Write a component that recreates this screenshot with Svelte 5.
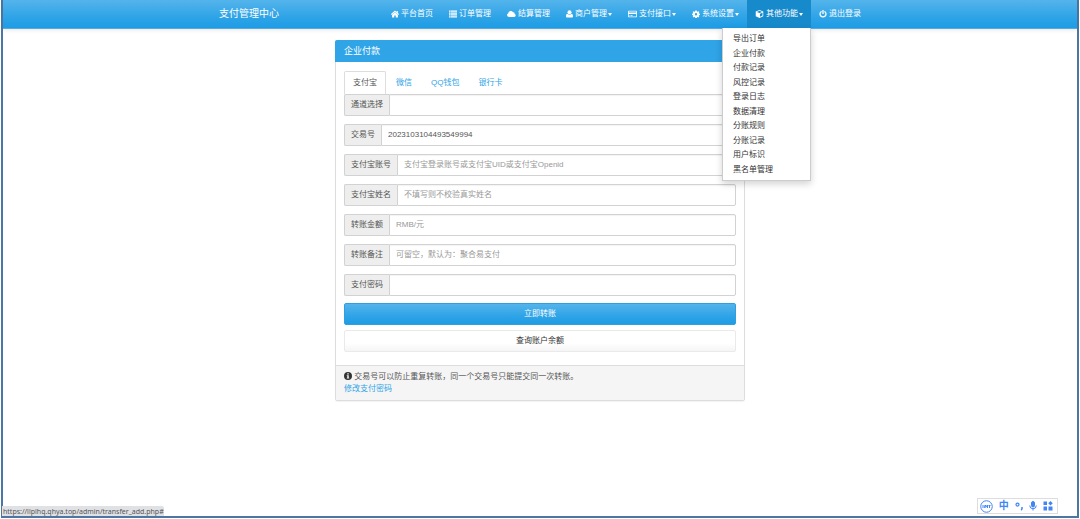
<script>
  const nav = [
    { label: '平台首页', icon: 'home', w: 8 },
    { label: '订单管理', icon: 'list', w: 8 },
    { label: '结算管理', icon: 'cloud', w: 9 },
    { label: '商户管理', icon: 'user', w: 7, caret: true },
    { label: '支付接口', icon: 'card', w: 9, caret: true },
    { label: '系统设置', icon: 'cog', w: 8, caret: true },
    { label: '其他功能', icon: 'cube', w: 9, caret: true, open: true },
    { label: '退出登录', icon: 'power', w: 8 }
  ];
  const menu = ['导出订单', '企业付款', '付款记录', '风控记录', '登录日志', '数据清理', '分账规则', '分账记录', '用户标识', '黑名单管理'];
  const tabs = ['支付宝', '微信', 'QQ钱包', '银行卡'];
  const fields = [
    { id: 'channel', label: '通道选择', select: true },
    { id: 'trade', label: '交易号', value: '2023103104493549994' },
    { id: 'account', label: '支付宝账号', hint: '支付宝登录账号或支付宝UID或支付宝Openid' },
    { id: 'name', label: '支付宝姓名', hint: '不填写则不校验真实姓名' },
    { id: 'money', label: '转账金额', hint: 'RMB/元' },
    { id: 'remark', label: '转账备注', hint: '可留空，默认为：聚合易支付' },
    { id: 'password', label: '支付密码', type: 'password' }
  ];
</script>

{#snippet icon(name, w)}
  <svg class="icon" width={w} height="8" viewBox="0 0 {w * 2} 16" fill="currentColor" aria-hidden="true">
    {#if name === 'home'}
      <path d="M8 1 0 8.200l1.200 1.600L8 3.800l6.800 6L16 8.200l-2.300-2V2h-2.400v2z" />
      <path d="M8 4.600 2.200 9.600V15h4.300v-4h3v4h4.300V9.600z" />
    {:else if name === 'list'}
      <path d="M0 1h2.500v2.600H0zM3.200 1H16v2.600H3.200zM0 4.800h2.500v2.600H0zM3.200 4.800H16v2.600H3.200zM0 8.600h2.500v2.600H0zM3.200 8.600H16v2.600H3.200zM0 12.400h2.500V15H0zM3.200 12.400H16V15H3.200z" />
    {:else if name === 'cloud'}
      <path d="M4 14a4 4 0 0 1-1.400-7.700A5 5 0 0 1 12 4.600a3 3 0 0 1 3.300 3.200A3.200 3.200 0 0 1 14.500 14z" />
    {:else if name === 'user'}
      <circle cx="7" cy="4.500" r="4" />
      <path d="M3 7.500a5.500 5.500 0 0 0 8 0c2.500.5 3 3 3 5.500 0 1.300-1 2-2 2H2c-1 0-2-.7-2-2 0-2.500.5-5 3-5.500z" />
    {:else if name === 'card'}
      <path fill-rule="evenodd" d="M1.500 1.500h15A1.500 1.500 0 0 1 18 3v10a1.500 1.500 0 0 1-1.500 1.500h-15A1.500 1.500 0 0 1 0 13V3a1.500 1.500 0 0 1 1.500-1.500zM1.500 3v2h15V3zm0 5v5h15V8zM3 10.500h2V12H3zm3 0h3V12H6z" />
    {:else if name === 'cog'}
      <path fill-rule="evenodd" d="m6.600 1h2.800l.4 2 1.200.5 1.800-1.200 1.900 1.900-1.200 1.700.4 1 2 .4v2.700l-2 .4-.4 1 1.200 1.800-1.900 1.900-1.800-1.200-1.200.5-.4 2H6.600l-.4-2-1.200-.5-1.700 1.200-2-1.900L2.500 11.400l-.4-1-2-.4V7.300l2-.4.4-1L1.300 4.200l2-1.900L5 3.500 6.200 3zM8 6.200a2.400 2.400 0 1 0 0 4.800 2.400 2.400 0 0 0 0-4.800z" />
    {:else if name === 'cube'}
      <path fill-rule="evenodd" d="m9 0 7.500 3v9.500L9 16l-7.500-3.500V3zm0 1.700L3.800 3.800 9 5.900l5.200-2.100zM10 7.500v6l5-2.300V5.500z" />
    {:else if name === 'power'}
      <path d="M6.700 0h2.600v8H6.700z" />
      <path d="M4.200 3.300a6 6 0 1 0 7.600 0" fill="none" stroke="currentColor" stroke-width="2.600" stroke-linecap="round" />
    {:else}
      <path fill-rule="evenodd" d="M8 0a8 8 0 1 1 0 16A8 8 0 0 1 8 0zM6.500 2.500v2.500h3V2.500zM5.500 6.500V8h1v3.500h-1V13h5v-1.500h-1v-5z" />
    {/if}
  </svg>
{/snippet}

<div class="window">
  <nav class="navbar">
    <div class="container">
      <a class="brand" href="#home">支付管理中心</a>
      <ul class="links">
        {#each nav as item}
          <li>
            <a href="#{item.icon}" class:open={item.open}>
              {@render icon(item.icon, item.w)}
              <span>{item.label}</span>
              {#if item.caret}<i class="caret"></i>{/if}
            </a>
            {#if item.open}
              <ul class="menu">
                {#each menu as entry}
                  <li><a href="#menu">{entry}</a></li>
                {/each}
              </ul>
            {/if}
          </li>
        {/each}
      </ul>
    </div>
  </nav>

  <main class="panel">
    <h1>企业付款</h1>
    <form>
      <ul class="tabs">
        {#each tabs as tab, i}
          <li><a href="#tab{i}" class:active={i === 0}>{tab}</a></li>
        {/each}
      </ul>
      {#each fields as f}
        <div class="group">
          <label for={f.id}>{f.label}</label>
          {#if f.select}
            <select id={f.id}></select>
          {:else}
            <input id={f.id} type={f.type ?? 'text'} value={f.value ?? ''} placeholder={f.hint ?? ''} />
          {/if}
        </div>
      {/each}
      <div class="actions">
        <button type="button" class="primary">立即转账</button>
        <button type="button" class="plain">查询账户余额</button>
      </div>
    </form>
    <footer>
      <p>{@render icon('info', 8)} 交易号可以防止重复转账，同一个交易号只能提交同一次转账。</p>
      <p><a href="#password">修改支付密码</a></p>
    </footer>
  </main>

  <div class="status">https://llplhq.qhya.top/admin/transfer_add.php#</div>

  <div class="ime">
    <svg width="13" height="13" viewBox="0 0 26 26" fill="none" stroke="currentColor" stroke-width="2" aria-hidden="true">
      <circle cx="13" cy="13" r="11.500" />
      <path d="M6 10v6M9.500 16v-5h3v3h-3M15 10v6M17 11h4M19 11v5" />
    </svg>
    <b>中</b>
    <svg width="9" height="9" viewBox="0 0 18 18" fill="none" stroke="currentColor" stroke-width="2.500" aria-hidden="true">
      <circle cx="5" cy="5" r="3" />
      <path d="M14 10v3q0 2-2 3" stroke-width="3" />
    </svg>
    <svg width="8" height="10" viewBox="0 0 16 20" fill="none" stroke="currentColor" stroke-width="2" aria-hidden="true">
      <rect x="5" y="1" width="6" height="11" rx="3" fill="currentColor" />
      <path d="M1.500 9a6.500 6.500 0 0 0 13 0M8 15v4" />
    </svg>
    <svg width="10" height="10" viewBox="0 0 20 20" fill="currentColor" aria-hidden="true">
      <path d="M1 1h7v7H1zM1 11h7v8H1zM11 11h8v8h-8zM15 0l4.500 4.500L15 9l-4.500-4.500z" />
    </svg>
  </div>
</div>

<style>
  * { box-sizing: border-box; }
  :global(body) { background: #fff; }
  ul, p, h1 { margin: 0; padding: 0; }
  ul { list-style: none; }
  a { color: #2fa4e7; text-decoration: none; }
  .window {
    position: relative;
    min-height: calc(100vh - 1px);
    margin: 0 1px;
    border: solid #4a78a3;
    border-width: 0 2px 2px;
    box-shadow: 0 1px #1a2233;
    font: 8px/12px "Liberation Sans", "Noto Sans CJK SC", sans-serif;
    color: #555;
  }
  .icon { flex: none; }
  .navbar {
    height: 29px;
    background: linear-gradient(#54b4eb, #2fa4e7 60%, #1d9ce5);
    border-bottom: 1px solid #5aabdc;
    box-shadow: 0 1px 4px #0000001a;
  }
  .container {
    display: flex;
    justify-content: space-between;
    max-width: 658px;
    height: 28px;
    margin: 0 auto;
  }
  .brand { padding: 0 8px; font-size: 10px; line-height: 28px; color: #fff; }
  .links { display: flex; }
  .links > li { position: relative; }
  .links > li > a {
    display: flex;
    align-items: center;
    gap: 2px;
    height: 28px;
    padding: 0 8px;
    color: #fff;
  }
  .links > li > a.open { background: #178acc; }
  .caret {
    margin-left: -1px;
    border: solid transparent;
    border-top-color: #fff;
    border-width: 3px 2px 0;
  }
  .menu {
    position: absolute;
    z-index: 2;
    top: 28px;
    right: 0;
    display: flex;
    flex-direction: column;
    justify-content: space-between;
    width: 89px;
    height: 153px;
    padding: 5px 10px 4px;
    background: #fff;
    border: 1px solid #ccc;
    border-top: 0;
    box-shadow: 0 3px 7px #0000002d;
  }
  .menu a { color: #333; }
  .panel {
    max-width: 410px;
    margin: 11px auto 0;
    border: 1px solid #ddd;
    border-radius: 2px;
    box-shadow: 0 1px 1px #0000000d;
  }
  h1 {
    margin: -1px -1px 0;
    padding: 0 9px;
    font-size: 9px;
    font-weight: 400;
    line-height: 22px;
    color: #fff;
    background: #2fa4e7;
    border-radius: 2px 2px 0 0;
  }
  form { padding: 9px 8px 13px; }
  .tabs { display: flex; gap: 1px; }
  .tabs a {
    display: block;
    padding: 5px 8px;
    border: 1px solid transparent;
    border-bottom: 0;
    border-radius: 2px 2px 0 0;
  }
  .tabs a.active { color: #555; background: #fff; border-color: #ddd; }
  .group { display: flex; height: 22px; margin-bottom: 8px; }
  .group label {
    padding: 0 6px;
    line-height: 20px;
    background: #eee;
    border: 1px solid #d2d2d2;
    border-right: 0;
    border-radius: 2px 0 0 2px;
  }
  .group input, .group select {
    flex: 1;
    min-width: 0;
    padding: 0 6px;
    font: inherit;
    color: #555;
    background: #fff;
    border: 1px solid #d2d2d2;
    border-radius: 0 2px 2px 0;
    box-shadow: inset 0 1px 1px #0000000d;
    appearance: none;
    outline: 0;
  }
  .group input::placeholder { color: #999; }
  .actions { display: grid; gap: 5px; margin-top: -1px; }
  button {
    height: 22px;
    padding: 0;
    font: inherit;
    border-radius: 2px;
  }
  .primary {
    color: #fff;
    background: linear-gradient(#54b4eb, #2fa4e7 60%, #1d9ce5);
    border: 1px solid #2f9fdf;
  }
  .plain {
    color: #333;
    background: linear-gradient(#fff, #fff 60%, #f5f5f5);
    border: 1px solid #eaeaea;
  }
  footer { padding: 5px 8px; background: #f5f5f5; border-top: 1px solid #ddd; }
  footer .icon { vertical-align: -1px; color: #333; }
  .status {
    position: absolute;
    left: -1px;
    bottom: 0;
    height: 10px;
    padding-left: 1px;
    font: 7px/12px "Noto Sans", sans-serif;
    color: #555;
    background: #dfe1e5;
    border-radius: 0 2px 0 0;
    overflow: hidden;
  }
  .ime {
    position: absolute;
    right: 19px;
    bottom: 2px;
    display: flex;
    align-items: center;
    justify-content: space-between;
    width: 81px;
    height: 16px;
    padding: 0 4px 0 2px;
    color: #4285f4;
    background: #fff;
    border: 1px solid #ddd;
  }
  .ime b { font-size: 10px; }
</style>
